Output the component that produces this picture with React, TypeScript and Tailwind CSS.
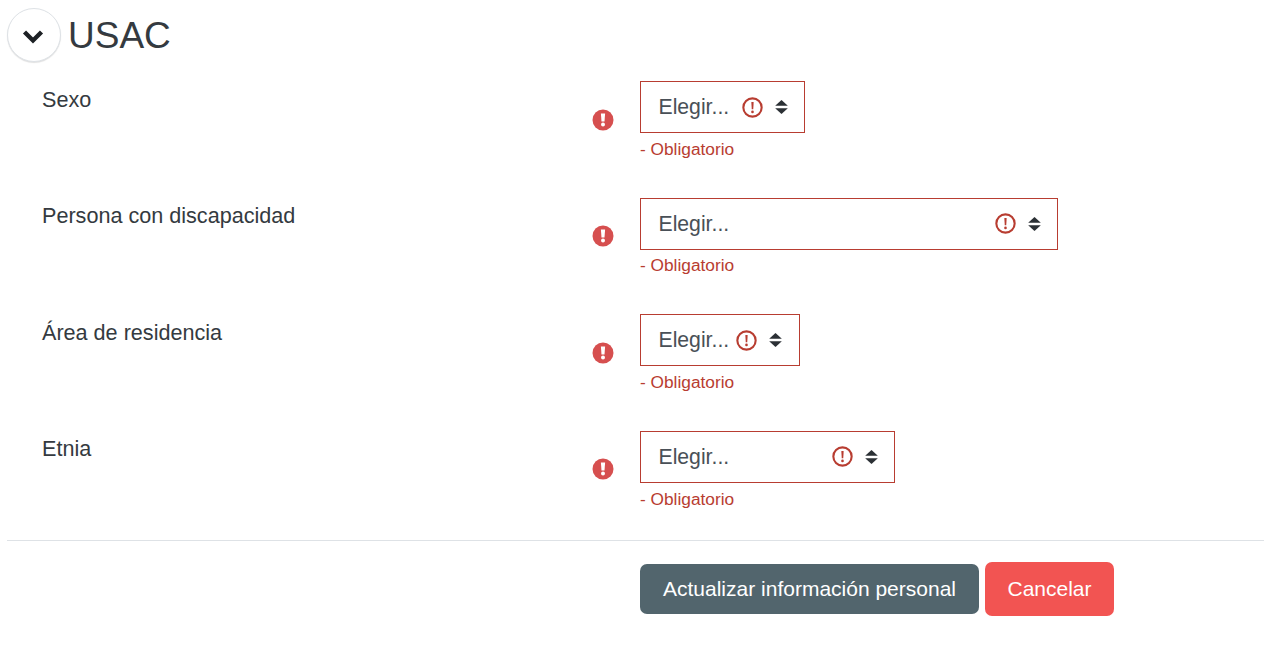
import React from "react";

function Warn({ className, fill }: { className: string; fill?: boolean }) {
  if (fill) {
    return (
      <svg viewBox="0 0 22 22" className={className}>
        <circle cx="11" cy="11" r="10.5" fill="#d64f4f" />
        <path d="M8.9 4.6h4.2l-.6 8h-3z" fill="#fff" />
        <circle cx="11" cy="15.6" r="2" fill="#fff" />
      </svg>
    );
  }
  return (
    <svg viewBox="0 0 22 22" className={className}>
      <circle cx="11" cy="11" r="9.6" fill="none" stroke="#b83d31" strokeWidth="2.2" />
      <path d="M9.8 5.2h2.4l-.4 7.6h-1.6z" fill="#b83d31" />
      <circle cx="11" cy="15.6" r="1.4" fill="#b83d31" />
    </svg>
  );
}

function Arrows() {
  return (
    <svg viewBox="0 0 13 16" className="w-[13px] h-[16px] shrink-0">
      <path d="M6.5 1 L12.8 6.8 H0.2 Z" fill="#2b3035" />
      <path d="M6.5 15 L12.8 9.2 H0.2 Z" fill="#2b3035" />
    </svg>
  );
}

const rows = [
  { label: "Sexo", w: "w-[165px]", gap: "ml-[13px]" },
  { label: "Persona con discapacidad", w: "w-[418px]", gap: "ml-auto" },
  { label: "Área de residencia", w: "w-[160px]", gap: "ml-[7px]" },
  { label: "Etnia", w: "w-[255px]", gap: "ml-auto" },
];

export default function App() {
  return (
    <div className="h-[663px] bg-white text-[#343a40] overflow-hidden font-['Liberation_Sans',Arial,sans-serif]">
      <div className="flex pl-[7px] pt-[8px] h-[81px] items-start">
        <button className="w-[54px] h-[54px] rounded-full bg-white border border-[#dee2e6] shadow-[0_1px_1px_rgba(0,0,0,0.12)] flex items-center justify-center shrink-0">
          <svg viewBox="0 0 24 24" className="w-[24px] h-[24px] mt-[2px] -ml-[2px]">
            <path d="M3.5 8 L12 16.5 L20.5 8" fill="none" stroke="#1d2125" strokeWidth="4.4" />
          </svg>
        </button>
        <h2 className="ml-[7px] text-[37px] leading-[55px] font-normal">USAC</h2>
      </div>
      <div className="flex flex-col">
        {rows.map((r) => (
          <div key={r.label} className="flex h-[116.6px]">
            <div className="w-[592px] pl-[42px] text-[21.6px] leading-[37px] -mt-[0.4px] shrink-0">{r.label}</div>
            <div className="w-[48px] shrink-0 pt-[27.6px]">
              <Warn fill className="w-[22px] h-[22px]" />
            </div>
            <div className="flex flex-col">
              <div className={`${r.w} h-[52px] border border-[#b83d31] flex items-center pl-[17.5px] pr-[16px] text-[21.2px] text-[#495057]`}>
                <span>Elegir...</span>
                <div className={`${r.gap} flex items-center gap-[12px]`}>
                  <Warn className="w-[21px] h-[21px] shrink-0" />
                  <Arrows />
                </div>
              </div>
              <div className="text-[17.3px] leading-[20px] mt-[5.8px] text-[#b83d31]">- Obligatorio</div>
            </div>
          </div>
        ))}
      </div>
      <div className="ml-[7px] border-t border-[#dee2e6] mt-[-7px]"></div>
      <div className="flex items-center pl-[640px] mt-[21px] gap-[6px]">
        <button className="w-[339px] h-[50px] pb-[2px] rounded-[7px] bg-[#52656d] text-white text-[21px]">Actualizar información personal</button>
        <button className="w-[129px] h-[54px] pb-[2px] rounded-[7px] bg-[#f25452] text-white text-[21px]">Cancelar</button>
      </div>
    </div>
  );
}
